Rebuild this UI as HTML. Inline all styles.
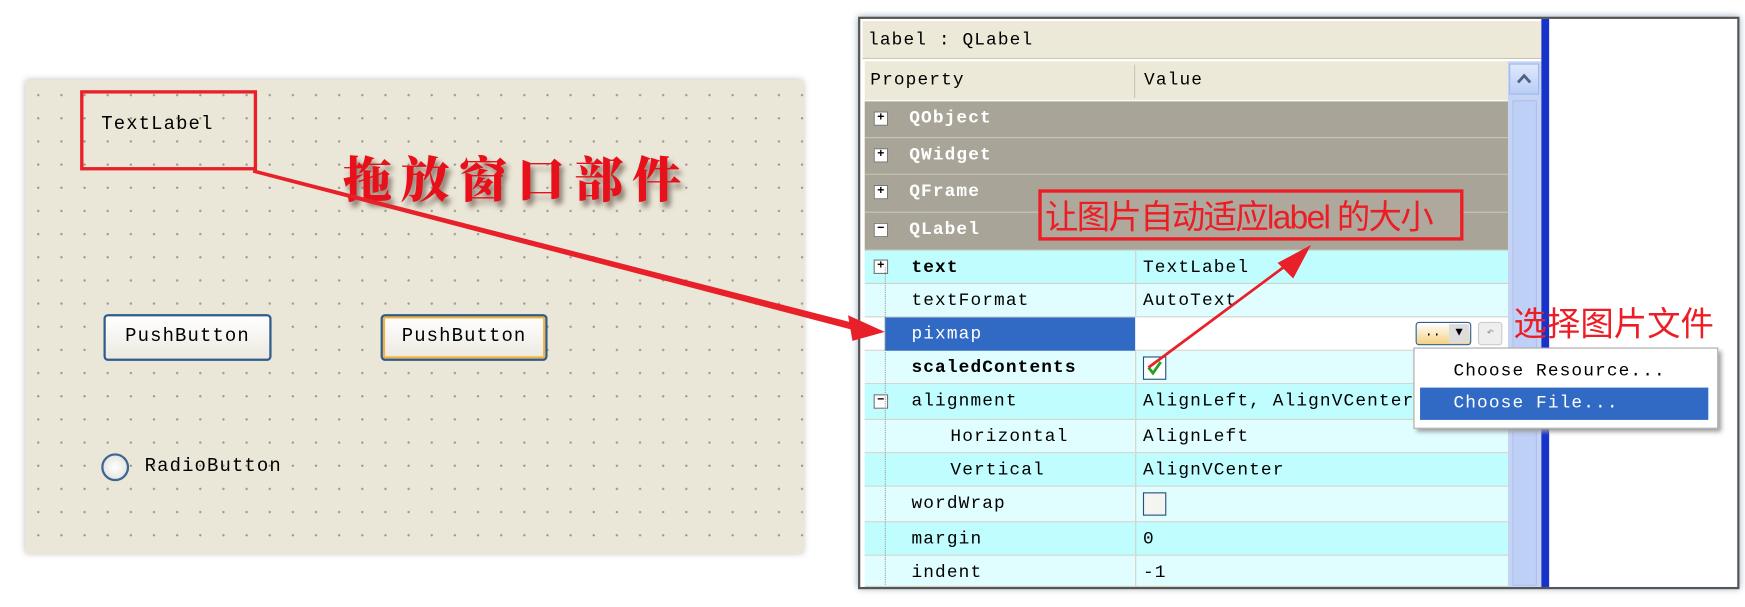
<!DOCTYPE html>
<html><head><meta charset="utf-8"><style>
html,body{margin:0;padding:0;width:1745px;height:607px;overflow:hidden;background:#fff}
#w{position:absolute;left:0;top:0;width:1568px;height:545px;transform:scale(1.1129,1.1138);transform-origin:0 0;font-family:"Liberation Mono","Noto Sans CJK SC",monospace}
.a{position:absolute}
.m{font-size:16px;letter-spacing:1px;color:#000;white-space:nowrap}
#lp{left:23px;top:72px;width:699px;height:425px;background-color:#ebe7d8;background-image:radial-gradient(circle,#9c9a8e 0.9px,transparent 1.2px);background-size:20.8px 20.8px;background-position:1px 3px;box-shadow:0 0 6px #bbb}
.btn{border:2px solid #2e5c8c;border-radius:4px;background:linear-gradient(#fff,#ece9e0);box-sizing:border-box;text-align:center;line-height:38px}
.row{position:absolute;left:777px;width:578px;border-bottom:1px solid #d4d0c8;box-sizing:border-box}
.row .p{position:absolute;left:42px;top:6px}
.row .v{position:absolute;left:250px;top:6px}
.g{background:#a8a497;border-bottom:1px solid #c8c4b8}
.g .p{color:#fff;font-weight:bold;left:40px}
.c1{background:#c0fdff}.c2{background:#e0feff}
.pm{position:absolute;left:8px;top:9px;width:11px;height:11px;border:1px solid #777;background:#fff;font-size:11px;line-height:10px;text-align:center;font-weight:bold}
.vl{position:absolute;left:243px;top:0;bottom:0;border-left:1px solid #d4d0c8}
</style></head><body><div id="w">
<div class="a" id="lp"></div>
<div class="a" style="left:72px;top:81px;width:153px;height:66px;border:3px solid #e8202a"></div>
<div class="a m" style="left:91px;top:103px;font-size:17px">TextLabel</div>
<div class="a" style="left:308px;top:126px;font-family:'Noto Serif CJK SC',serif;font-weight:900;font-size:44px;letter-spacing:8px;color:#e8101a;text-shadow:3px 5px 5px #8a7d70">拖放窗口部件</div>
<div class="a btn m" style="left:93px;top:282px;width:151px;height:42px;font-size:17px">PushButton</div>
<div class="a btn m" style="left:342px;top:282px;width:150px;height:42px;box-shadow:inset 0 0 0 2px #f5b13a;font-size:17px">PushButton</div>
<div class="a" style="left:91px;top:407px;width:25px;height:25px;border:2px solid #3d6593;border-radius:50%;background:radial-gradient(#fff,#dcdcd4);box-sizing:border-box"></div>
<div class="a m" style="left:130px;top:410px;font-size:17px">RadioButton</div>

<div class="a" style="left:771px;top:15px;width:792px;height:514px;background:#fff;border:2px solid #555;box-sizing:border-box;box-shadow:0 0 6px #9ab"></div>
<div class="a" style="left:775px;top:19px;width:610px;height:33px;background:#ece9d8;border-bottom:1px solid #c9c6b8"></div>
<div class="a m" style="left:780px;top:27px">label : QLabel</div>
<div class="a" style="left:777px;top:55px;width:578px;height:35px;background:#ece9d8"></div>
<div class="a" style="left:1019px;top:58px;height:30px;border-left:1px solid #c9c6b8"></div>
<div class="a m" style="left:782px;top:63px">Property</div>
<div class="a m" style="left:1028px;top:63px">Value</div>
<div class="a" style="left:1355px;top:55px;width:30px;height:472px;background:#c5d4f5"></div>
<div class="a" style="left:1356px;top:57px;width:27px;height:28px;background:linear-gradient(#dfe8fd,#b9cdf6);border:1px solid #a0b8e8;box-sizing:border-box"><svg width="25" height="26"><path d="M7 16 L12.5 10 L18 16" fill="none" stroke="#4d6185" stroke-width="2.5"/></svg></div>
<div class="a" style="left:1359px;top:90px;width:22px;height:436px;background:#bfd0f6;border:1px solid #aec0ea;box-sizing:border-box"></div>
<div class="a" style="left:1385px;top:17px;width:7px;height:510px;background:#1733c9"></div>

<div class="row g" style="top:91px;height:33px"><div class="pm">+</div><div class="p m">QObject</div></div>
<div class="row g" style="top:124px;height:33px"><div class="pm">+</div><div class="p m">QWidget</div></div>
<div class="row g" style="top:157px;height:34px"><div class="pm">+</div><div class="p m">QFrame</div></div>
<div class="row g" style="top:191px;height:34px"><div class="pm">−</div><div class="p m">QLabel</div></div>
<div class="row c1" style="top:225px;height:30px"><div class="vl"></div><div class="pm" style="top:8px">+</div><div class="p m" style="font-weight:bold">text</div><div class="v m">TextLabel</div></div>
<div class="row c2" style="top:255px;height:30px"><div class="vl"></div><div class="p m">textFormat</div><div class="v m">AutoText</div></div>
<div class="row" style="top:285px;height:30px;background:#fff"><div class="a" style="left:18px;top:0;width:225px;height:30px;background:#316ac5"></div><div class="p m" style="color:#fff">pixmap</div>
<div class="a" style="left:495px;top:4px;width:50px;height:21px;border:1px solid #2e5c8c;border-radius:3px;background:linear-gradient(#fff,#f5d080);box-sizing:border-box;font-size:12px;line-height:16px">&nbsp;..<span style="position:absolute;right:1px;top:1px;width:18px;height:17px;background:#ddd;text-align:center;font-size:11px">▼</span></div>
<div class="a" style="left:551px;top:4px;width:22px;height:21px;border:1px solid #ccc;border-radius:3px;background:#eee;box-sizing:border-box;color:#999;font-size:11px;text-align:center;line-height:18px">↶</div></div>
<div class="row c2" style="top:315px;height:30px"><div class="vl"></div><div class="p m" style="font-weight:bold">scaledContents</div><div class="a" style="left:250px;top:5px;width:19px;height:19px;border:1px solid #1c5180;background:#fff"><svg width="19" height="19"><path d="M4 9 L8 14 L15 4" fill="none" stroke="#21a121" stroke-width="2.5"/></svg></div></div>
<div class="row c1" style="top:345px;height:32px"><div class="vl"></div><div class="pm">−</div><div class="p m">alignment</div><div class="v m">AlignLeft, AlignVCenter</div></div>
<div class="row c2" style="top:377px;height:30px"><div class="vl"></div><div class="p m" style="left:77px">Horizontal</div><div class="v m">AlignLeft</div></div>
<div class="row c1" style="top:407px;height:30px"><div class="vl"></div><div class="p m" style="left:77px">Vertical</div><div class="v m">AlignVCenter</div></div>
<div class="row c2" style="top:437px;height:32px"><div class="vl"></div><div class="p m">wordWrap</div><div class="a" style="left:250px;top:5px;width:19px;height:19px;border:1px solid #1c5180;background:#f4f4f0"></div></div>
<div class="row c1" style="top:469px;height:30px"><div class="vl"></div><div class="p m">margin</div><div class="v m">0</div></div>
<div class="row c2" style="top:499px;height:28px"><div class="vl"></div><div class="p m">indent</div><div class="v m">-1</div></div>
<div class="a" style="left:795px;top:240px;height:285px;border-left:1px dotted #999"></div>

<div class="a" style="left:1270px;top:312px;width:272px;height:71px;background:#fff;border:1px solid #aaa;box-shadow:3px 3px 4px #999"></div>
<div class="a m" style="left:1306px;top:324px">Choose Resource...</div>
<div class="a" style="left:1276px;top:348px;width:259px;height:29px;background:#316ac5"></div>
<div class="a m" style="left:1306px;top:353px;color:#fff">Choose File...</div>

<div class="a" style="left:933px;top:170px;width:382px;height:46px;border:3px solid #ee1c24;box-sizing:border-box;background:#aea99c"></div>
<div class="a" style="left:939px;top:170px;font-family:'Liberation Sans','Noto Sans CJK SC',sans-serif;font-size:30px;color:#ee1c24;white-space:nowrap;letter-spacing:-1.5px">让图片自动适应label 的大小</div>
<div class="a" style="left:1360px;top:266px;font-family:'Liberation Sans','Noto Sans CJK SC',sans-serif;font-size:30px;color:#ee1c24;white-space:nowrap">选择图片文件</div>
<svg class="a" style="left:0;top:0" width="1568" height="545">
<polygon points="228,152 775,292 773,298 227,155" fill="#e8202a"/>
<polygon points="762,283 795,298 766,306" fill="#e8202a"/>
<line x1="1032" y1="330" x2="1160" y2="235" stroke="#e8202a" stroke-width="2.5"/>
<polygon points="1148,236 1178,220 1162,250" fill="#e8202a"/>
</svg>
</div></body></html>
